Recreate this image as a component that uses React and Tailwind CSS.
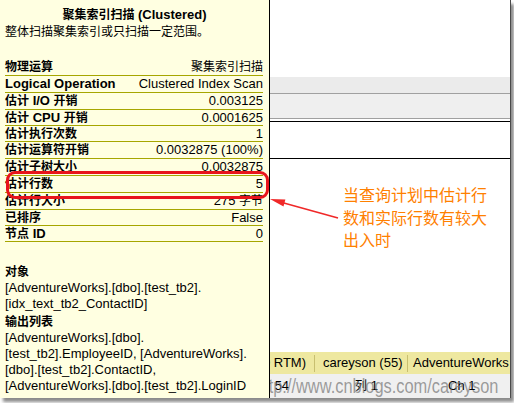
import React from "react";

const CJK = /([\u2E80-\u9FFF\u3000-\u303F\uFF00-\uFFEF]+)/;
const CJK_TEST = /[\u2E80-\u9FFF\u3000-\u303F\uFF00-\uFFEF]/;

function T({ children }) {
  const parts = String(children).split(CJK);
  return parts.map((p, i) =>
    p && CJK_TEST.test(p) ? (
      <span key={i} className="text-[12px]">
        {p}
      </span>
    ) : (
      <React.Fragment key={i}>{p}</React.Fragment>
    )
  );
}

const rows = [
  ["物理运算", "聚集索引扫描", 17],
  ["Logical Operation", "Clustered Index Scan", 17],
  ["估计 I/O 开销", "0.003125", 17],
  ["估计 CPU 开销", "0.0001625", 16],
  ["估计执行次数", "1", 16],
  ["估计运算符开销", "0.0032875 (100%)", 17],
  ["估计子树大小", "0.0032875", 17],
  ["估计行数", "5", 17],
  ["估计行大小", "275 字节", 17],
  ["已排序", "False", 16],
  ["节点 ID", "0", 16],
];

export default function App() {
  return (
    <div className="relative w-[514px] h-[403px] bg-white overflow-hidden font-['Liberation_Sans','Noto_Sans_CJK_SC',sans-serif] text-[13px] text-black">
      {/* underlying window */}
      <div className="flex flex-col w-[511px] h-[398px] border-r border-[#4a4a4a] shadow-[3px_4px_3px_rgba(0,0,0,0.45)]">
        <div className="h-[77px] bg-white" />
        <div className="h-[17px] bg-[#ebebeb] border-b border-[#a0a0a0]" />
        <div className="h-[25px] bg-[#efefef] border-b border-[#a0a0a0]" />
        <div className="h-[2px] bg-white" />
        <div className="h-[1px] bg-black" />
        <div className="h-[36px] bg-white" />
        <div className="h-[1px] bg-black" />
        <div className="flex-1 bg-white" />
        {/* status bar */}
        <div className="h-[22px] flex items-center bg-[#eee8a0] whitespace-nowrap overflow-hidden">
          <div className="w-[314px] shrink-0 text-right pr-[8px]">CAREYSON-PC (10.0 RTM)</div>
          <div className="w-px h-[17px] bg-[#c8bf70] shrink-0" />
          <div className="w-[92px] shrink-0 pl-[8px]">careyson (55)</div>
          <div className="w-px h-[17px] bg-[#c8bf70] shrink-0" />
          <div className="pl-[5px]">AdventureWorks</div>
        </div>
        {/* bottom row */}
        <div className="relative h-[24px] flex items-center bg-[#f0f0f0] whitespace-nowrap overflow-hidden">
          <div className="w-[355px] shrink-0 pl-[259px]">
            <T>行 54</T>
          </div>
          <div className="w-[93px] shrink-0">
            <T>列 1</T>
          </div>
          <div>Ch 1</div>
          <div className="absolute left-[255px] top-[0px] text-[20px] leading-[24px] text-[rgba(120,120,120,0.72)] origin-left scale-x-[0.82]">
            http://www.cnblogs.com/careyson
          </div>
        </div>
      </div>

      {/* tooltip */}
      <div className="absolute left-0 top-0 w-[270px] h-[398px] bg-[#ffffe1] border-r border-black">
        <div className="pt-[6px] h-[59px]">
          <div className="h-[17px] leading-[17px] text-center font-bold">
            <T>聚集索引扫描</T> (Clustered)
          </div>
          <div className="h-[17px] leading-[17px] pl-[5px]">
            <T>整体扫描聚集索引或只扫描一定范围。</T>
          </div>
        </div>
        <div className="mx-[5px] w-[258px]">
          {rows.map(([k, v, h], i) => (
            <div
              key={i}
              className={
                (h === 17 ? "h-[17px] " : "h-[16px] ") +
                "flex items-center justify-between border-b border-[#a6a600] whitespace-nowrap"
              }
            >
              <span className="font-bold">
                <T>{k}</T>
              </span>
              <span>
                <T>{v}</T>
              </span>
            </div>
          ))}
        </div>
        <div className="pl-[5px] pt-[22px] leading-[16px] whitespace-nowrap">
          <div className="h-[16px] font-bold">
            <T>对象</T>
          </div>
          <div className="h-[16px]">[AdventureWorks].[dbo].[test_tb2].</div>
          <div className="h-[16px]">[idx_text_tb2_ContactID]</div>
          <div className="h-[16px] mt-[2px] font-bold">
            <T>输出列表</T>
          </div>
          <div className="h-[16px]">[AdventureWorks].[dbo].</div>
          <div className="h-[16px]">[test_tb2].EmployeeID, [AdventureWorks].</div>
          <div className="h-[16px]">[dbo].[test_tb2].ContactID,</div>
          <div className="h-[16px]">[AdventureWorks].[dbo].[test_tb2].LoginID</div>
        </div>
      </div>

      {/* red highlight */}
      <div className="absolute left-[6px] top-[171px] w-[263px] h-[28px] border-[3px] border-[#e8141c] rounded-[9px]" />

      {/* arrow */}
      <svg className="absolute left-0 top-0 pointer-events-none" width="514" height="403" viewBox="0 0 514 403">
        <line x1="338" y1="218" x2="282" y2="202.5" stroke="#f02828" strokeWidth="1.6" />
        <polygon points="270,199 285.4,199.6 283.5,206.4" fill="#f02828" />
      </svg>

      {/* annotation */}
      <div className="absolute left-[343px] top-[183px] text-[16px] leading-[22.5px] text-[#ff8000] font-['Noto_Sans_CJK_SC',sans-serif] whitespace-nowrap">
        <div>当查询计划中估计行</div>
        <div>数和实际行数有较大</div>
        <div>出入时</div>
      </div>
    </div>
  );
}
